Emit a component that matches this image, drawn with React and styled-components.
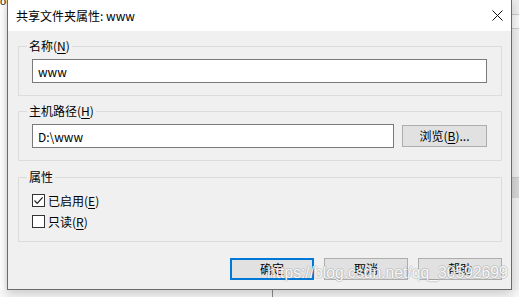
import styled, { createGlobalStyle } from "styled-components";

const GlobalStyle = createGlobalStyle`
  html, body {
    margin: 0;
    padding: 0;
    background: #fff;
  }
  * {
    box-sizing: border-box;
  }
`;

const FONT = `"Noto Sans CJK SC", "Noto Sans", sans-serif`;

const App = () => {
  return (
    <>
      <GlobalStyle />
      <Screen>
        <TopArea>
          <LeftEdge>
            <span className="black">o</span>
            <span className="orange">c</span>
          </LeftEdge>
          <Dialog>
            <TitleBar>
              <span>共享文件夹属性: www</span>
              <CloseBox>
                <svg width="11" height="11" viewBox="0 0 11 11">
                  <path
                    d="M0.5 0.5 L10.5 10.5 M10.5 0.5 L0.5 10.5"
                    stroke="#111"
                    strokeWidth="1"
                    fill="none"
                  />
                </svg>
              </CloseBox>
            </TitleBar>

            <Body>
              <Group $gap={0}>
                <Legend>
                  名称(<u>N</u>)
                </Legend>
                <TextField defaultValue="www" readOnly />
              </Group>

              <Group $gap={7}>
                <Legend>
                  主机路径(<u>H</u>)
                </Legend>
                <PathRow>
                  <TextField defaultValue="D:\www" readOnly />
                  <Button $width={85}>
                    浏览(<u>B</u>)...
                  </Button>
                </PathRow>
              </Group>

              <Group $gap={8} $top={5} $bottom={9}>
                <Legend>属性</Legend>
                <CheckRow>
                  <CheckBox checked />
                  <span>
                    已启用(<u>E</u>)
                  </span>
                </CheckRow>
                <CheckRow>
                  <CheckBox />
                  <span>
                    只读(<u>R</u>)
                  </span>
                </CheckRow>
              </Group>

              <ButtonRow>
                <Button $primary>确定</Button>
                <Button>取消</Button>
                <Button>帮助</Button>
              </ButtonRow>
            </Body>
            <Watermark>https://blog.csdn.net/qq_30592699</Watermark>
          </Dialog>
          <RightEdge />
        </TopArea>
        <BottomArea>
          <BottomLine />
        </BottomArea>
      </Screen>
    </>
  );
};
export default App;

// checkbox drawing
function CheckBox({ checked }) {
  return (
    <Box>
      {checked && (
        <svg width="11" height="11" viewBox="0 0 11 11">
          <path
            d="M1.5 5.5 L4.2 8.3 L9.6 2.4"
            stroke="#1f1f1f"
            strokeWidth="1.2"
            fill="none"
          />
        </svg>
      )}
    </Box>
  );
}

/****************** styled component ***************/

const Screen = styled.div`
  position: relative;
  width: 519px;
  height: 297px;
  overflow: hidden;
  background: #fff;
  display: flex;
  flex-direction: column;
  font-family: ${FONT};
`;

const TopArea = styled.div`
  display: flex;
  height: 290px;
`;

const LeftEdge = styled.div`
  width: 7px;
  flex-shrink: 0;
  background: linear-gradient(to right, #fff 0, #fff 3px, #f2f2f2 7px);
  font-family: "Liberation Sans", sans-serif;
  font-size: 11px;
  line-height: 6px;
  overflow: hidden;
  white-space: nowrap;
  margin-top: -2px;

  .black {
    color: #222;
  }
  .orange {
    color: #d07a20;
  }
`;

const Dialog = styled.div`
  position: relative;
  width: 505px;
  flex-shrink: 0;
  border: 1px solid #6a6a6a;
  border-top: none;
  background: #f0f0f0;
  display: flex;
  flex-direction: column;
  box-shadow: 0 4px 10px rgba(0, 0, 0, 0.18);
  z-index: 1;
`;

const TitleBar = styled.div`
  height: 31px;
  background: #fff;
  display: flex;
  align-items: center;
  justify-content: space-between;
  padding-left: 8px;
  font-size: 12px;
  line-height: 16px;
  color: #000;
`;

const CloseBox = styled.div`
  width: 28px;
  height: 31px;
  display: flex;
  align-items: center;
  justify-content: center;
`;

const Body = styled.div`
  display: flex;
  flex-direction: column;
  padding: 7px 9px 8px 10px;
  font-size: 12px;
  color: #000;
`;

const Group = styled.fieldset`
  margin: ${(p) => p.$gap}px 0 0 0;
  padding: ${(p) => p.$top ?? 5}px 14px ${(p) => p.$bottom ?? 12}px 13px;
  border: 1px solid #dcdcdc;
  min-width: 0;
  display: flex;
  flex-direction: column;

  u {
    text-underline-offset: 2px;
  }
`;

const Legend = styled.legend`
  margin-left: -5px;
  padding: 0 2px;
  height: 16px;
  font-size: 12px;
  line-height: 16px;
`;

const TextField = styled.input`
  flex: none;
  display: block;
  width: 100%;
  min-width: 0;
  height: 24px;
  margin: 0;
  padding: 0 5px;
  border: 1px solid #7a7a7a;
  background: #fff;
  font-family: ${FONT};
  font-size: 12px;
  color: #000;
  outline: none;
`;

const PathRow = styled.div`
  display: grid;
  grid-template-columns: 1fr auto;
  align-items: center;
  gap: 8px;
`;

const Button = styled.button`
  width: ${(p) => p.$width ?? 84}px;
  height: 22px;
  flex-shrink: 0;
  margin: 0;
  padding: 0;
  background: #e1e1e1;
  border: ${(p) => (p.$primary ? "2px solid #0078d7" : "1px solid #adadad")};
  font-family: ${FONT};
  font-size: 12px;
  line-height: 16px;
  color: #000;

  u {
    text-underline-offset: 2px;
  }
`;

const CheckRow = styled.div`
  display: flex;
  align-items: center;
  gap: 3px;
  height: 21px;
  line-height: 16px;

  u {
    text-underline-offset: 2px;
  }
`;

const Box = styled.div`
  width: 13px;
  height: 13px;
  border: 1px solid #333;
  background: #fff;
  display: flex;
  align-items: center;
  justify-content: center;
`;

const ButtonRow = styled.div`
  display: flex;
  justify-content: flex-end;
  gap: 10px;
  margin-top: 16px;
`;

const Watermark = styled.div`
  position: absolute;
  left: 259px;
  top: 263px;
  font-family: "Liberation Sans", sans-serif;
  font-size: 15.7px;
  line-height: 20px;
  color: rgba(255, 255, 255, 0.92);
  text-shadow: 1px 0 0 rgba(120, 120, 120, 0.25), -1px 0 0 rgba(120, 120, 120, 0.25),
    0 1px 0 rgba(120, 120, 120, 0.25), 0 -1px 0 rgba(120, 120, 120, 0.25);
  white-space: nowrap;
  pointer-events: none;
`;

const RightEdge = styled.div`
  flex: 1;
  background: linear-gradient(
    to bottom,
    #ececec 0,
    #ececec 14px,
    #c8c8c8 14px,
    #c8c8c8 15px,
    #f6f6f6 15px,
    #f6f6f6 28px,
    #c8c8c8 28px,
    #c8c8c8 29px,
    #ededed 29px,
    #ededed 177px,
    #b8b8b8 177px,
    #d6d6d6 178px,
    #d6d6d6 197px,
    #b8b8b8 197px,
    #f0f0f0 198px
  );
`;

const BottomArea = styled.div`
  flex: 1;
  display: flex;
  background: #f7f7f7;
  padding-left: 272px;
`;

const BottomLine = styled.div`
  width: 1px;
  background: #8a8a8a;
`;
